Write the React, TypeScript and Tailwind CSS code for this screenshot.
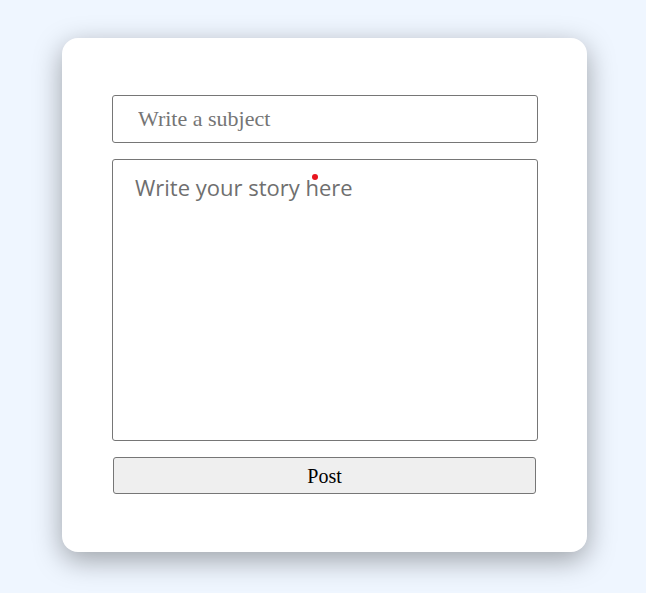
export default function App() {
  return (
    <div className="min-h-[593px] w-full bg-[#eff6ff] pt-[38px] pl-[62px]">
      <div className="w-[525px] h-[514px] bg-white rounded-[16px] shadow-[0_8px_28px_rgba(0,0,0,0.35)] pt-[57px] pl-[50px]">
        <form className="flex flex-col gap-4 w-[426px]">
          <input
            placeholder="Write a subject"
            className="h-[48px] w-full border border-[#767676] rounded-[3px] px-[25px] text-[22px] text-black placeholder:text-[#757575] focus:outline-0"
            style={{ fontFamily: '"Liberation Serif", serif' }}
          />
          <div className="relative">
            <textarea
              placeholder="Write your story here"
              className="block h-[282px] w-full resize-none border border-[#767676] rounded-[3px] px-[22px] pt-[11px] text-[22px] leading-[33px] text-black placeholder:text-[#6f6f6f] focus:outline-0"
              style={{ fontFamily: '"Open Sans", sans-serif' }}
            />
            <span className="absolute left-[200px] top-[15px] w-[6px] h-[6px] rounded-full bg-[#e8141e]" />
          </div>
          <button
            type="button"
            className="h-[37px] w-[423px] ml-px bg-[#efefef] border border-[#767676] rounded-[3px] text-[20px] text-black"
            style={{ fontFamily: '"Liberation Serif", serif' }}
          >
            Post
          </button>
        </form>
      </div>
    </div>
  );
}
